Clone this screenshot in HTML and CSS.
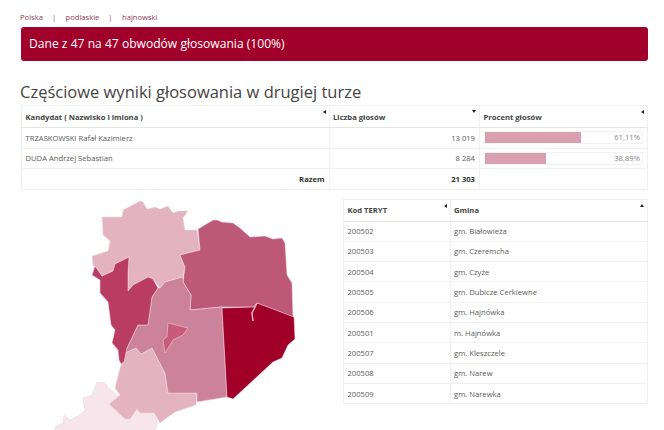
FILE: index.html
```html
<!DOCTYPE html>
<html lang="pl">
<head>
  <meta charset="UTF-8" />
  <meta name="viewport" content="width=device-width, initial-scale=1" />
  <title>Wyniki głosowania - hajnowski</title>
  <link rel="stylesheet" href="styles.css">
</head>
<body>

  <nav class="crumbs">
    <a href="#">Polska</a><span class="sep">|</span><a href="#">podlaskie</a><span class="sep">|</span><a href="#">hajnowski</a>
  </nav>

  <div class="alert">Dane z 47 na 47 obwodów głosowania (100%)</div>

  <h2>Częściowe wyniki głosowania w drugiej turze</h2>

  <table class="grid results">
    <thead>
      <tr>
        <th class="sort-left">Kandydat ( Nazwisko i imiona )</th>
        <th class="sort-down">Liczba głosów</th>
        <th class="sort-left">Procent głosów</th>
      </tr>
    </thead>
    <tbody>
      <tr>
        <td>TRZASKOWSKI Rafał Kazimierz</td>
        <td class="num">13 019</td>
        <td><div class="bar"><div class="fill" style="width: 61.11%"></div><span>61,11%</span></div></td>
      </tr>
      <tr>
        <td>DUDA Andrzej Sebastian</td>
        <td class="num">8 284</td>
        <td><div class="bar"><div class="fill" style="width: 38.89%"></div><span>38,89%</span></div></td>
      </tr>
      <tr class="total">
        <td class="num">Razem</td>
        <td class="num">21 303</td>
        <td></td>
      </tr>
    </tbody>
  </table>

  <div class="lower">
    <svg class="map" viewBox="0 195 332 235" aria-label="Mapa powiatu hajnowskiego">
      <g stroke="#f3dfe5" stroke-width="0.5" stroke-linejoin="round">
        <path fill="#f6e6ec" stroke="#e4d0d8" d="M97 382 105 383 108 388 115 393 117 397 109 404 125 419 130 419 137 409 140 413 154 413 158 423 154 431 55 431 55 427 63 423 64 415 70 420 80 415 85 410 83 398 92 395 95 387Z"/>
        <path fill="#e3b3c1" d="M120 368 125 353 136 348 141 354 152 348 165 373 168 393 197 393 196 405 175 412 160 423 154 413 140 413 137 409 130 419 125 419 109 404 120 395 115 388Z"/>
        <path fill="#e3b3c1" d="M102 217 122 217 123 210 140 201 143 202 147 209 155 207 160 209 168 206 173 213 178 211 188 211 183 218 185 230 197 230 200 250 180 255 185 267 183 277 165 282 160 288 153 279 148 277 133 285 128 291 128 273 129 257 115 264 113 271 102 276 95 266 93 266 92 256 108 251 110 241 103 235Z"/>
        <path fill="#bd5878" d="M198 229 213 220 217 220 222 222 233 223 240 228 250 237 265 236 273 239 282 238 285 243 287 275 292 283 293 317 257 303 254 307 222 307 190 310 191 295 183 282 185 267 180 255 200 250Z"/>
        <path fill="#cc829b" d="M183 277 183 282 191 295 190 310 222 307 227 397 197 402 197 393 168 393 165 373 152 348 141 354 136 348 125 353 127 348 138 325 148 325 152 297 158 288 160 288 165 282Z"/>
        <path fill="#b93d63" d="M92 275 95 266 102 276 113 271 115 264 129 257 128 273 128 291 133 285 148 277 153 279 158 288 152 297 148 325 138 325 127 348 124 362 121 364 119 360 118 350 112 343 115 330 111 325 108 302 100 293 100 280Z"/>
        <path fill="#c95a7c" d="M168 323 188 328 183 335 173 340 165 353 163 340 167 337Z"/>
        <path fill="#a10028" d="M222 308 254 307 257 303 294 317 295 339 288 345 282 358 273 362 233 399 227 397Z"/>
      </g>
      <path d="M257 303 252 313 253 321" fill="none" stroke="#e3b3c1" stroke-width="1.5"/>
    </svg>

    <table class="grid gminy">
      <thead>
        <tr>
          <th class="sort-left">Kod TERYT</th>
          <th class="sort-up">Gmina</th>
        </tr>
      </thead>
      <tbody>
        <tr><td>200502</td><td>gm. Białowieża</td></tr>
        <tr><td>200503</td><td>gm. Czeremcha</td></tr>
        <tr><td>200504</td><td>gm. Czyże</td></tr>
        <tr><td>200505</td><td>gm. Dubicze Cerkiewne</td></tr>
        <tr><td>200506</td><td>gm. Hajnówka</td></tr>
        <tr><td>200501</td><td>m. Hajnówka</td></tr>
        <tr><td>200507</td><td>gm. Kleszczele</td></tr>
        <tr><td>200508</td><td>gm. Narew</td></tr>
        <tr><td>200509</td><td>gm. Narewka</td></tr>
      </tbody>
    </table>
  </div>

</body>
</html>
```

FILE: styles.css
```css
html, body {
  height: 100%;
  overflow: hidden;
}
body {
  margin: 0;
  padding: 12px 16px 0 21px;
  background: #fff;
  color: #5a5a5a;
  font-family: "Open Sans", sans-serif;
  font-size: 7.65px;
}
.crumbs {
  height: 15px;
  margin-left: -1px;
  line-height: 11px;
  font-size: 7.6px;
}
.crumbs a {
  color: #8a3a52;
  text-decoration: none;
}
.crumbs .sep {
  margin: 0 9.5px 0 9px;
  color: #8a3a52;
}
.alert {
  height: 34px;
  line-height: 34px;
  padding-left: 8px;
  background: #a0002a;
  border-radius: 3px;
  color: #fff;
  font-size: 12.1px;
}
h2 {
  margin: 18px 0 0 -1px;
  height: 26px;
  line-height: 26px;
  color: #444;
  font-size: 16.5px;
  font-weight: 400;
}
.grid {
  border-collapse: collapse;
  table-layout: fixed;
  background: #fff;
}
.grid th, .grid td {
  border: 1px solid #f0f0f0;
  padding: 0 4px 0 3.5px;
  text-align: left;
  white-space: nowrap;
}
.grid th {
  position: relative;
  height: 21px;
  border-bottom: 1px solid #e6e6e6;
  color: #444;
  font-weight: 700;
}
.grid td {
  height: 19.5px;
}
.results {
  width: 627px;
}
.results th:nth-child(1) { width: 299px; }
.results th:nth-child(2) { width: 142px; }
.num {
  text-align: right !important;
}
.total td {
  color: #333;
  font-weight: 700;
}
.bar {
  position: relative;
  height: 11px;
  line-height: 11px;
  border: 1px solid #f3f3f3;
  text-align: right;
  color: #888;
}
.bar .fill {
  position: absolute;
  left: 0;
  top: 0;
  height: 100%;
  background: #d9a0b2;
}
.bar span {
  position: relative;
  padding-right: 2px;
}

/* strzalki sortowania */
.sort-left::after, .sort-down::after, .sort-up::after {
  content: "";
  position: absolute;
  top: 4px;
  right: 3px;
  border: solid transparent;
}
.sort-left::after {
  border-width: 2px 3px 2px 0;
  border-right-color: #222;
}
.sort-down::after {
  border-width: 3px 2px 0 2px;
  border-top-color: #222;
}
.sort-up::after {
  border-width: 0 2px 3px 2px;
  border-bottom-color: #222;
}

.lower {
  display: flex;
  margin: 9px 0 0 -21px;
}
.map {
  flex: none;
  width: 332px;
  height: 235px;
  margin-top: -4px;
}
.gminy {
  flex: none;
  width: 305px;
  margin-left: 11px;
  align-self: flex-start;
}
.gminy th:nth-child(1) { width: 98px; }
.gminy td {
  height: 19.3px;
}
```
